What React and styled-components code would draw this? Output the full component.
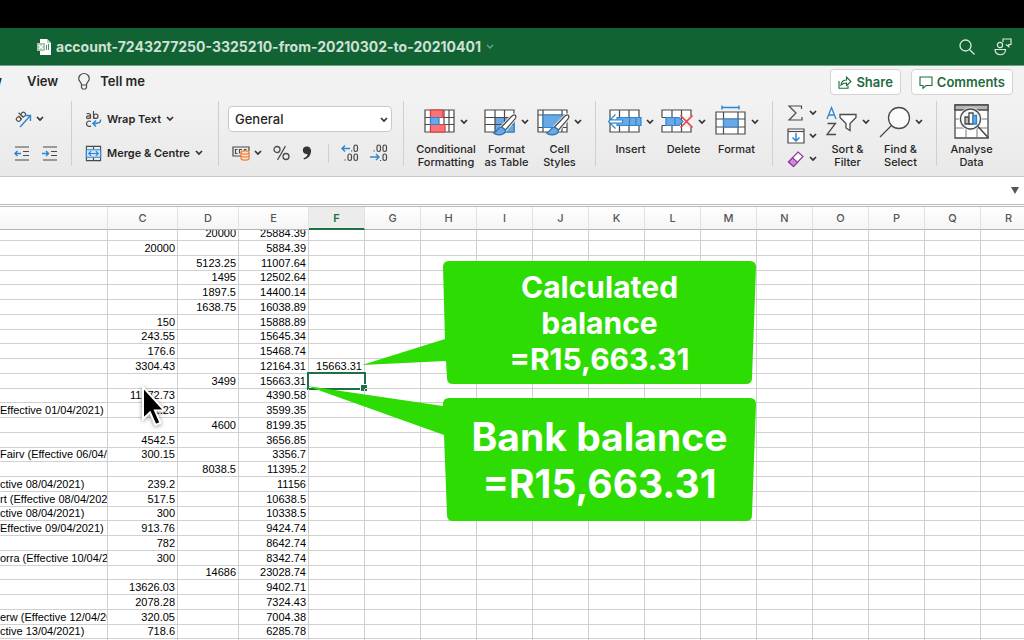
import React from 'react'
import styled, { createGlobalStyle } from 'styled-components'

const COLUMNS = ['C', 'D', 'E', 'F', 'G', 'H', 'I', 'J', 'K', 'L', 'M', 'N', 'O', 'P', 'Q', 'R']
const WIDTHS = { B: 108, C: 70, D: 61, E: 70 }

// [description, debit, credit, balance, check]
const ROWS = [
    ['', '', '20000', '25884.39'],
    ['', '20000', '', '5884.39'],
    ['', '', '5123.25', '11007.64'],
    ['', '', '1495', '12502.64'],
    ['', '', '1897.5', '14400.14'],
    ['', '', '1638.75', '16038.89'],
    ['', '150', '', '15888.89'],
    ['', '243.55', '', '15645.34'],
    ['', '176.6', '', '15468.74'],
    ['', '3304.43', '', '12164.31', '15663.31'],
    ['', '', '3499', '15663.31'],
    ['', '11272.73', '', '4390.58'],
    ['Effective 01/04/2021)', '791.23', '', '3599.35'],
    ['', '', '4600', '8199.35'],
    ['', '4542.5', '', '3656.85'],
    ['Fairv (Effective 06/04/2021)', '300.15', '', '3356.7'],
    ['', '', '8038.5', '11395.2'],
    ['ctive 08/04/2021)', '239.2', '', '11156'],
    ['rt (Effective 08/04/2021)', '517.5', '', '10638.5'],
    ['ctive 08/04/2021)', '300', '', '10338.5'],
    ['Effective 09/04/2021)', '913.76', '', '9424.74'],
    ['', '782', '', '8642.74'],
    ['orra (Effective 10/04/2021)', '300', '', '8342.74'],
    ['', '', '14686', '23028.74'],
    ['', '13626.03', '', '9402.71'],
    ['', '2078.28', '', '7324.43'],
    ['erw (Effective 12/04/2021)', '320.05', '', '7004.38'],
    ['ctive 13/04/2021)', '718.6', '', '6285.78'],
    ['', '', '', ''],
]

const SELECTED_ROW = 10

const ink = '#4a4a4a'
const blue = '#2f86d0'
const fill = '#6aa9e6'

function Chevron() {
    return (
        <svg width="8" height="6" viewBox="0 0 8 6" fill="none" stroke="#333" strokeWidth="1.7">
            <path d="M1 1l3 3 3-3" />
        </svg>
    )
}

function FileIcon() {
    return (
        <svg width="14" height="16" viewBox="0 0 14 16">
            <path d="M3 0h7l4 4v12H3z" fill="#fff" />
            <path d="M10 0v4h4z" fill="#b9d3c3" />
            <rect x="0" y="4" width="8" height="8" fill="#a5c7b2" />
            <path d="M2 6l4 4M6 6l-4 4" stroke="#fff" strokeWidth="1.2" />
            <path d="M9.5 6v5M11.5 5v6" stroke="#4f8d68" />
        </svg>
    )
}

function SearchIcon() {
    return (
        <svg width="16" height="16" viewBox="0 0 16 16" fill="none" stroke="#dbe9e0" strokeWidth="1.3">
            <circle cx="6.5" cy="6.5" r="5.5" />
            <path d="M10.5 10.5l5 5" />
        </svg>
    )
}

function PeopleIcon() {
    return (
        <svg width="18" height="18" viewBox="0 0 18 18" fill="none" stroke="#dbe9e0" strokeWidth="1.2">
            <circle cx="6" cy="7" r="2.6" />
            <path d="M1 11.5h10.5c0 7-10.5 7-10.5 0z" />
            <path d="M9 4V1h8v5.5h-2.2v2.2L12 6.5" />
        </svg>
    )
}

function BulbIcon() {
    return (
        <svg width="12" height="17" viewBox="0 0 12 17" fill="none" stroke={ink} strokeWidth="1.2">
            <path d="M3.5 11.5c0-2-2.8-3-2.8-6a5.3 5 0 0110.6 0c0 3-2.8 4-2.8 6v3l-1 1.5h-3l-1-1.5zM3.5 12h5" />
        </svg>
    )
}

function ShareIcon() {
    return (
        <svg width="14" height="13" viewBox="0 0 14 13" fill="none" stroke="#1f6b3d" strokeWidth="1.1">
            <path d="M1 5v7.3h9V9.5" />
            <path d="M3 9c.5-3.5 2.5-5 5.5-5V1l4.5 4.5-4.5 4V7C6 7 4.5 7.5 3 9z" />
        </svg>
    )
}

function CommentIcon() {
    return (
        <svg width="14" height="13" viewBox="0 0 14 13" fill="none" stroke="#1f6b3d" strokeWidth="1.1">
            <path d="M1 1h12v8.5H7L4 12.3V9.5H1z" />
        </svg>
    )
}

function OrientationIcon() {
    return (
        <svg width="18" height="17" viewBox="0 0 18 17" fill="none" stroke={ink} strokeWidth="1.1">
            <g transform="rotate(-45 6 6)">
                <circle cx="3.5" cy="6.5" r="2.2" />
                <path d="M5.7 4v5M8 2v7" />
                <circle cx="10.2" cy="6.5" r="2.2" />
            </g>
            <path d="M6 16L16 5M11 4.5h5.5V10" stroke={blue} strokeWidth="1.4" />
        </svg>
    )
}

function IndentIcon({ right }) {
    return (
        <svg width="16" height="15" viewBox="0 0 16 15" fill="none" stroke={ink} strokeWidth="1.2">
            <path d="M1 1h14M9 5.5h6M9 9.5h6M1 14h14" />
            <path
                d={right ? 'M0 7.5h6.5M4 5l2.5 2.5L4 10' : 'M7 7.5H.8M3.5 5L1 7.5 3.5 10'}
                stroke={blue}
                strokeWidth="1.5"
            />
        </svg>
    )
}

function WrapIcon() {
    return (
        <svg width="17" height="18" viewBox="0 0 17 18" fill="none" stroke={ink} strokeWidth="1.2">
            <path d="M1.5 4.2c1-1 4-1 4 .8v3.7M5.5 6c-2-.2-4 0-4 1.3 0 1.8 3 1.6 4-.3M8.5 1v7.7" />
            <circle cx="10.8" cy="6.2" r="2.2" />
            <path d="M6 11.5c-1.5-1-4.5-.5-4.5 2.2s3 3.3 4.5 2.2" />
            <path d="M15.5 9.5c.5 3-1.5 4-7 4M11 10.5l-3 3 3 3" stroke={blue} strokeWidth="1.6" />
        </svg>
    )
}

function MergeIcon() {
    return (
        <svg width="17" height="17" viewBox="0 0 18 17" fill="none" stroke={ink} strokeWidth="1.2">
            <path d="M1.5 1h15v15h-15zM9 1v3M9 13v3" />
            <path d="M1.5 4.5h15v8h-15z" fill="#cfe4f7" stroke={blue} />
            <path d="M4.5 8.5h9M6.5 6L4 8.5 6.5 11M11.5 6L14 8.5 11.5 11" stroke={blue} strokeWidth="1.3" />
        </svg>
    )
}

function CurrencyIcon() {
    return (
        <svg width="18" height="16" viewBox="0 0 18 16" fill="none" stroke={ink} strokeWidth="1.2">
            <path d="M9 11H1V2h16v4" />
            <path d="M5.5 4.5h-2v4h2M10 4.5H7.5v4M12.5 6V4.5h2" />
            <g fill="#fbe3d3" stroke="#ee7a2d">
                <path d="M9 7.5v6c0 2.2 8 2.2 8 0v-6" />
                <path d="M9 10.5c0 2 8 2 8 0" />
                <ellipse cx="13" cy="7.5" rx="4" ry="1.6" />
            </g>
        </svg>
    )
}

function PercentIcon() {
    return (
        <svg width="17" height="16" viewBox="0 0 17 16" fill="none" stroke={ink} strokeWidth="1.3">
            <circle cx="4" cy="4.5" r="3" />
            <circle cx="13" cy="11.5" r="3" />
            <path d="M12.5 1l-8 14" />
        </svg>
    )
}

function CommaIcon() {
    return (
        <svg width="10" height="14" viewBox="0 0 10 14" fill="#333">
            <path d="M4.5.5c3 0 5 2 4.5 5.5C8.500 10 6 12.500 2 13.500l-.5-1.200C4 11.500 5.500 10 5.500 8 3 8.500.8 7 .8 4.300.8 2 2.500.5 4.500.5z" />
        </svg>
    )
}

function DecimalIcon({ more }) {
    return (
        <svg width="18" height="18" viewBox="0 0 18 18" fill="none" stroke={ink} strokeWidth="1.2">
            {more ? (
                <>
                    <rect x="13" y="1" width="3.5" height="6.5" rx="1.7" />
                    <rect x="7" y="10" width="3.5" height="6.5" rx="1.7" />
                    <rect x="13" y="10" width="3.5" height="6.5" rx="1.7" />
                    <path d="M3.5 16h1.3M10 7h1.2" />
                    <path d="M9 4.5H1M4 1.5l-3 3 3 3" stroke={blue} strokeWidth="1.4" />
                </>
            ) : (
                <>
                    <rect x="7" y="1" width="3.5" height="6.5" rx="1.7" />
                    <rect x="13" y="1" width="3.5" height="6.5" rx="1.7" />
                    <rect x="13" y="10" width="3.5" height="6.5" rx="1.7" />
                    <path d="M3.5 7h1.3M10 16.5h1.2" />
                    <path d="M0 13h9M6 10l3 3-3 3" stroke={blue} strokeWidth="1.4" />
                </>
            )}
        </svg>
    )
}

function Brush() {
    return (
        <>
            <path d="M31 8c1.5 1 1 2.5 0 4l-9.500 11-4-3L27 10c1.500-1.500 3-2.500 4-2z" fill="#fff" stroke="#f0f0f0" strokeWidth="3" />
            <path d="M31 8c1.5 1 1 2.5 0 4l-9.500 11-4-3L27 10c1.500-1.500 3-2.500 4-2z" fill="#fff" />
            <path d="M17.5 20c-4 0-4 5-8 6 4 3.5 12 2 12-3z" fill={fill} stroke="#2b6fae" />
        </>
    )
}

function ConditionalIcon() {
    return (
        <svg width="32" height="30" viewBox="0 0 32 30" fill="none" stroke={ink} strokeWidth="1.2">
            <path d="M1 3h29v22H1z" fill="#fff" />
            <path d="M1 10.5h29M1 17.5h29M6.5 3v22M20 3v22M25 3v22" />
            <path d="M6.5 3H19v7.5H6.5zM6.5 17.5H21V25H6.5z" fill="#fb7379" stroke="#e0393f" />
            <path d="M6.5 10.5H15v7H6.5z" fill={fill} stroke={blue} />
        </svg>
    )
}

function TableIcon() {
    return (
        <svg width="33" height="30" viewBox="0 0 33 30" fill="none" stroke={ink} strokeWidth="1.2">
            <path d="M1 3h29v22H1z" fill="#fff" />
            <path d="M11 10.5h19V25H11z" fill={fill} stroke="none" />
            <path d="M1 10.5h29M1 17.5h29M11 3v22M20.5 3v22" />
            <path d="M11 25h19V10.5" stroke={blue} />
            <Brush />
        </svg>
    )
}

function StylesIcon() {
    return (
        <svg width="33" height="30" viewBox="0 0 33 30" fill="none" stroke={ink} strokeWidth="1.2">
            <path d="M1 3h29v22H1z" fill="#fff" />
            <path d="M1 8h29M1 20.5h29M6 3v22M25 3v22" />
            <path d="M6 8h19v12.5H6z" fill={fill} stroke={blue} />
            <Brush />
        </svg>
    )
}

function InsertIcon() {
    return (
        <svg width="34" height="30" viewBox="0 0 34 30" fill="none" stroke={ink} strokeWidth="1.2">
            <path d="M2 3h29v22H2zM11.5 3v22M21 3v22" fill="#fff" />
            <path d="M9 10.5h24v8H9z" fill={fill} stroke={blue} />
            <path d="M21.5 10.5v8M28 10.5v8" stroke={blue} />
            <path d="M7.5 7L0 14.5 7.5 22v-5.5H15v-4H7.5z" fill="#fff" stroke="none" />
            <path d="M7.5 7.5l-7 7 7 7M1 12.9h13.5v3.2H1" stroke={blue} />
        </svg>
    )
}

function DeleteIcon() {
    return (
        <svg width="33" height="30" viewBox="0 0 33 30" fill="none" stroke={ink} strokeWidth="1.2">
            <path d="M1 3h29v22H1zM11 3v22M20.5 3v22" fill="#fff" />
            <path d="M0 10.5h5v8H0zM24 9h9v11h-9z" fill="#f0f0f0" stroke="none" />
            <path d="M1 10.5h5M1 18.5h5" />
            <path d="M5 10.5h13l4 4-4 4H5zM14 10.5v8" fill={fill} stroke={blue} />
            <path d="M19.5 8.5l12 12M31.5 8.5l-12 12" stroke="#e8434a" strokeWidth="1.7" />
        </svg>
    )
}

function FormatIcon() {
    return (
        <svg width="32" height="34" viewBox="0 0 32 34" fill="none" stroke={ink} strokeWidth="1.2">
            <path d="M1 7h29v22H1z" fill="#fff" />
            <path d="M1 14h29M1 22h29M8.5 7v22M23 7v22" />
            <path d="M8.5 14H23v8H8.5z" fill={fill} stroke={blue} />
            <path d="M7 2.5h17M7 .5v4M24 .5v4" stroke={blue} strokeWidth="1.4" />
        </svg>
    )
}

function SumIcon() {
    return (
        <svg width="18" height="16" viewBox="0 0 18 16" fill="none" stroke={ink} strokeWidth="1.2">
            <path d="M14.5 4V1H2l7 7-7 7h13v-3" />
        </svg>
    )
}

function FillIcon() {
    return (
        <svg width="18" height="16" viewBox="0 0 18 16" fill="none" stroke={ink} strokeWidth="1.2">
            <path d="M1 1h16v14H1z" fill="#fff" />
            <path d="M1 3.5h16" />
            <path d="M9 5v7.5M5.5 9.5L9 13l3.5-3.5" stroke={blue} strokeWidth="1.5" />
        </svg>
    )
}

function EraserIcon() {
    return (
        <svg width="18" height="16" viewBox="0 0 18 16" stroke="#8e3a9b" strokeWidth="1.2">
            <path d="M11 1l5 4.5-9.5 10-5-4.500z" fill="#fff" />
            <path d="M5.5 6.8l5 4.5-4 4.2-5-4.500z" fill="#d08bdb" />
        </svg>
    )
}

function SortIcon() {
    return (
        <svg width="32" height="32" viewBox="0 0 32 32" fill="none" strokeWidth="1.3">
            <path d="M1 13L5.5 1.5 10 13M2.7 9h5.7" stroke={blue} />
            <path d="M1.5 17.5h8L1 28.5h9" stroke={ink} />
            <path d="M14 8.5h16v3l-6 6v7L20 22v-4.500l-6-6z" fill="#fff" stroke={ink} />
        </svg>
    )
}

function FindIcon() {
    return (
        <svg width="32" height="32" viewBox="0 0 32 32" fill="none" stroke={ink} strokeWidth="1.3">
            <circle cx="20" cy="12" r="10.5" fill="#fafafa" />
            <path d="M12.5 19.5L1 31" />
        </svg>
    )
}

function AnalyseIcon() {
    return (
        <svg width="36" height="36" viewBox="0 0 36 36" fill="none" stroke={ink} strokeWidth="1.3">
            <path d="M1 1h33v33H1z" fill="#fff" />
            <path d="M1 1h33v5H1z" fill="#b5b5b5" />
            <path d="M1 15h33M1 24h33M12 6v28M23 6v28" stroke="#777" strokeWidth="1" />
            <circle cx="16.5" cy="15" r="11.5" fill="#f0f0f0" stroke="none" />
            <circle cx="16.5" cy="15" r="10" fill="#fafafa" />
            <path d="M24 22.5L34.5 34" strokeWidth="1.6" />
            <path d="M11 13h4v7h-4z" fill="#bdbdbd" />
            <path d="M15 9h4v11h-4z" fill="#fff" />
            <path d="M19 11.5h3.5V20H19z" fill={fill} stroke={blue} />
        </svg>
    )
}

function PointerIcon() {
    return (
        <svg width="25" height="42" viewBox="0 0 25 42">
            <path d="M2 2v32l7-6.5L14.5 40l5-2.200L14 25.500h9.500z" fill="#000" stroke="#fff" strokeWidth="2" />
        </svg>
    )
}

function Tool({ icon, label, wide }) {
    return (
        <ToolButton type="button" $wide={wide}>
            <ToolArt>
                {icon}
                <Chevron />
            </ToolArt>
            <ToolLabel>{label}</ToolLabel>
        </ToolButton>
    )
}

function App() {
    return (
        <Page>
            <GlobalStyle />
            <TitleBar>
                <FileTitle>
                    <FileIcon />
                    <h1>account-7243277250-3325210-from-20210302-to-20210401</h1>
                    <svg width="8" height="6" viewBox="0 0 8 6" fill="none" stroke="#6fa083" strokeWidth="1.5">
                        <path d="M1 1l3 3 3-3" />
                    </svg>
                </FileTitle>
                <TitleActions>
                    <IconButton type="button" aria-label="Search"><SearchIcon /></IconButton>
                    <IconButton type="button" aria-label="People"><PeopleIcon /></IconButton>
                </TitleActions>
            </TitleBar>

            <TabBar>
                <CutTab><Tab type="button">Review</Tab></CutTab>
                <Tab type="button">View</Tab>
                <Tab type="button"><BulbIcon />Tell me</Tab>
                <TabActions>
                    <ActionButton type="button"><ShareIcon />Share</ActionButton>
                    <ActionButton type="button"><CommentIcon />Comments</ActionButton>
                </TabActions>
            </TabBar>

            <Ribbon>
                <SmallGroup $width={72} $pad={14}>
                    <ToolLine>
                        <IconButton type="button" aria-label="Orientation"><OrientationIcon /><Chevron /></IconButton>
                    </ToolLine>
                    <ToolLine>
                        <IconButton type="button" aria-label="Decrease indent"><IndentIcon /></IconButton>
                        <IconButton type="button" aria-label="Increase indent"><IndentIcon right /></IconButton>
                    </ToolLine>
                </SmallGroup>
                <SmallGroup $width={147} $pad={13}>
                    <TextTool type="button"><WrapIcon />Wrap Text<Chevron /></TextTool>
                    <TextTool type="button"><MergeIcon />Merge &amp; Centre<Chevron /></TextTool>
                </SmallGroup>
                <SmallGroup $width={185} $pad={9}>
                    <SelectBox>
                        <select aria-label="Number format" defaultValue="General">
                            <option>General</option>
                        </select>
                        <Chevron />
                    </SelectBox>
                    <NumberLine>
                        <IconButton type="button" aria-label="Currency"><CurrencyIcon /><Chevron /></IconButton>
                        <IconButton type="button" aria-label="Percent"><PercentIcon /></IconButton>
                        <IconButton type="button" aria-label="Comma"><CommaIcon /></IconButton>
                        <Rule />
                        <IconButton type="button" aria-label="Increase decimal"><DecimalIcon more /></IconButton>
                        <IconButton type="button" aria-label="Decrease decimal"><DecimalIcon /></IconButton>
                    </NumberLine>
                </SmallGroup>
                <Group>
                    <Tool wide icon={<ConditionalIcon />} label={<>Conditional<br />Formatting</>} />
                    <Tool icon={<TableIcon />} label={<>Format<br />as Table</>} />
                    <Tool icon={<StylesIcon />} label={<>Cell<br />Styles</>} />
                </Group>
                <Group>
                    <Tool icon={<InsertIcon />} label="Insert" />
                    <Tool icon={<DeleteIcon />} label="Delete" />
                    <Tool icon={<FormatIcon />} label="Format" />
                </Group>
                <Group>
                    <EditStack>
                        <IconButton type="button" aria-label="AutoSum"><SumIcon /><Chevron /></IconButton>
                        <IconButton type="button" aria-label="Fill"><FillIcon /><Chevron /></IconButton>
                        <IconButton type="button" aria-label="Clear"><EraserIcon /><Chevron /></IconButton>
                    </EditStack>
                    <Tool icon={<SortIcon />} label={<>Sort &amp;<br />Filter</>} />
                    <Tool icon={<FindIcon />} label={<>Find &amp;<br />Select</>} />
                </Group>
                <Group>
                    <ToolButton type="button">
                        <ToolArt><AnalyseIcon /></ToolArt>
                        <ToolLabel>Analyse<br />Data</ToolLabel>
                    </ToolButton>
                </Group>
            </Ribbon>

            <FormulaBar>
                <input type="text" aria-label="Formula" />
                <IconButton type="button" aria-label="Expand formula bar">
                    <svg width="8" height="7" viewBox="0 0 8 7"><path d="M0 0h8L4 7z" fill="#555" /></svg>
                </IconButton>
            </FormulaBar>

            <SheetArea>
                <Sheet>
                    <colgroup>
                        <Col $width={WIDTHS.B} />
                        {COLUMNS.map((name) => (
                            <Col key={name} $width={WIDTHS[name] || 56} />
                        ))}
                    </colgroup>
                    <thead>
                        <tr>
                            <HeadCell />
                            {COLUMNS.map((name) => (
                                <HeadCell key={name} scope="col" $active={name === 'F'}>{name}</HeadCell>
                            ))}
                        </tr>
                    </thead>
                    <tbody>
                        {ROWS.map(([text, ...values], index) => (
                            <Row key={index}>
                                <Cell $text><span>{text}</span></Cell>
                                {COLUMNS.map((name, col) => (
                                    <Cell key={name}>
                                        <span>{values[col]}</span>
                                        {index === SELECTED_ROW && name === 'F' && <Selection />}
                                    </Cell>
                                ))}
                            </Row>
                        ))}
                    </tbody>
                </Sheet>
                <Pointer><PointerIcon /></Pointer>
                <Callout $top={54}>
                    <svg width="313" height="123" viewBox="0 0 313 123">
                        <path d="M6 0H307Q313 0 313 6L309 117Q309 123 303 123H10Q4 123 4 117L3 100-81 104 2 78 0 6Q0 0 6 0z" />
                    </svg>
                    <p>Calculated<br />balance<br />=R15,663.31</p>
                </Callout>
                <Callout $top={191} $large>
                    <svg width="313" height="123" viewBox="0 0 313 123">
                        <path d="M6 0H307Q313 0 313 6L309 117Q309 123 303 123H10Q4 123 4 117L1 37-136-12 0 8V6Q0 0 6 0z" />
                    </svg>
                    <p>Bank balance<br />=R15,663.31</p>
                </Callout>
            </SheetArea>
        </Page>
    )
}

export default App

const GlobalStyle = createGlobalStyle`
    * {
        box-sizing: border-box;
    }
    body {
        margin: 0;
        font-family: Inter, "Liberation Sans", sans-serif;
        color: #262626;
    }
    button, input, select {
        font: inherit;
        color: inherit;
    }
    button {
        padding: 0;
        border: none;
        background: none;
        white-space: nowrap;
    }
    svg {
        display: block;
        flex-shrink: 0;
        overflow: visible;
    }
`

const Page = styled.div`
    height: 100vh;
    display: flex;
    flex-direction: column;
    overflow: hidden;
    border-top: 28px solid #000;
    background: #fff;
`

const TitleBar = styled.header`
    flex: none;
    height: 38px;
    padding: 0 12px 0 37px;
    display: flex;
    align-items: center;
    justify-content: space-between;
    background: #126334;
    border-bottom: 1px solid #6f9f82;
`

const FileTitle = styled.div`
    display: flex;
    align-items: center;
    gap: 5px;
    h1 {
        margin: 0;
        font-size: 14px;
        font-weight: 700;
        color: #cfe0d6;
    }
`

const TitleActions = styled.div`
    display: flex;
    align-items: center;
    gap: 19px;
`

const IconButton = styled.button`
    display: flex;
    align-items: center;
    gap: 4px;
`

const TabBar = styled.nav`
    flex: none;
    height: 32px;
    display: flex;
    align-items: center;
    background: #f2f2f2;
`

const Tab = styled.button`
    display: flex;
    align-items: center;
    gap: 10px;
    height: 32px;
    padding-bottom: 2px;
    margin-right: 20px;
    font-size: 13px;
    font-weight: 600;
`

const CutTab = styled.div`
    width: 2px;
    margin-right: 25px;
    display: flex;
    justify-content: flex-end;
    overflow: hidden;
    ${Tab} {
        margin: 0;
    }
`

const TabActions = styled.div`
    display: flex;
    gap: 10px;
    margin-left: auto;
    padding-right: 11px;
`

const ActionButton = styled.button`
    display: flex;
    align-items: center;
    gap: 4px;
    height: 26px;
    padding: 0 7px;
    border: 1px solid #d4d4d0;
    border-radius: 4px;
    background: #fff;
    color: #1f6b3d;
    font-size: 13px;
    font-weight: 600;
`

const Ribbon = styled.div`
    flex: none;
    display: flex;
    padding: 3px 0 10px;
    background: linear-gradient(#f2f2f2, #e9e9e9);
    border-bottom: 1px solid #c9c9c9;
`

const Group = styled.div`
    display: flex;
    flex: none;
    gap: 8px;
    height: 65px;
    padding: 0 13px 0 12px;
    border-right: 1px solid #cfcfcf;
    &:last-child {
        border-right: none;
    }
`

const SmallGroup = styled(Group)`
    flex-direction: column;
    width: ${(props) => props.$width}px;
    padding: 5px 0 0 ${(props) => props.$pad}px;
`

const ToolLine = styled.div`
    display: flex;
    align-items: center;
    height: 26px;
    gap: 12px;
`

const TextTool = styled.button`
    display: flex;
    align-items: center;
    gap: 5px;
    height: 26px;
    font-size: 11px;
    font-weight: 600;
`

const SelectBox = styled.div`
    position: relative;
    width: 164px;
    height: 26px;
    select {
        width: 100%;
        height: 100%;
        padding: 0 6px;
        appearance: none;
        border: 1px solid #c9c9c9;
        border-radius: 4px;
        background: #fff;
        font-size: 13px;
        font-weight: 500;
    }
    svg {
        position: absolute;
        right: 4px;
        top: 11px;
    }
`

const NumberLine = styled.div`
    display: flex;
    align-items: center;
    justify-content: space-between;
    width: 164px;
    height: 26px;
    padding: 0 4px;
`

const Rule = styled.span`
    width: 1px;
    height: 19px;
    margin-left: 5px;
    background: #cfcfcf;
`

const ToolButton = styled.button`
    display: flex;
    flex-direction: column;
    align-items: center;
    justify-content: flex-start;
    width: ${(props) => (props.$wide ? 60 : 45)}px;
`

const ToolArt = styled.span`
    flex: none;
    display: flex;
    align-items: center;
    justify-content: center;
    gap: 4px;
    height: 42px;
`

const ToolLabel = styled.span`
    font-size: 11px;
    font-weight: 500;
    line-height: 13px;
    text-align: center;
`

const EditStack = styled.div`
    display: flex;
    flex-direction: column;
    gap: 7px;
    padding: 4px 0 0 2px;
`

const FormulaBar = styled.div`
    flex: none;
    display: flex;
    align-items: center;
    height: 30px;
    padding-right: 5px;
    background: #fff;
    border-bottom: 3px double #b9b9b9;
    input {
        flex: 1;
        border: none;
        outline: none;
        background: none;
    }
`

const SheetArea = styled.main`
    position: relative;
    flex: 1;
    min-height: 0;
    overflow: hidden;
    font-family: "Liberation Sans", Arial, sans-serif;
    font-size: 11px;
`

const Sheet = styled.table`
    table-layout: fixed;
    width: 0;
    border-collapse: separate;
    border-spacing: 0;
    color: #000;
`

const Col = styled.col`
    width: ${(props) => props.$width}px;
`

const HeadCell = styled.th`
    height: 23px;
    padding: 0;
    border-right: 1px solid #e2e2e2;
    border-bottom: ${(props) => (props.$active ? '2px solid #1e7145' : '1px solid #b5b5b5')};
    background: ${(props) => (props.$active ? '#ececec' : 'linear-gradient(#fff, #f4f4f4)')};
    color: ${(props) => (props.$active ? '#1e7145' : '#555')};
    font-family: Inter, sans-serif;
    font-size: 11px;
    font-weight: ${(props) => (props.$active ? 600 : 500)};
`

const Cell = styled.td`
    position: relative;
    padding: 0 ${(props) => (props.$text ? 0 : 2)}px 0 0;
    border-right: 1px solid #d0d0d0;
    border-bottom: 1px solid #d0d0d0;
    span {
        display: flex;
        align-items: flex-end;
        justify-content: ${(props) => (props.$text ? 'flex-start' : 'flex-end')};
        height: 14px;
        line-height: 13px;
        white-space: nowrap;
        overflow: hidden;
    }
`

const Row = styled.tr`
    &:nth-child(4n) ${Cell} span {
        height: 13px;
    }
    /* scrolled partly under the header */
    &:first-child ${Cell} span {
        height: 10px;
    }
`

const Selection = styled.i`
    position: absolute;
    inset: -2px;
    border: 2px solid #1e7145;
    &::after {
        content: '';
        position: absolute;
        right: -3px;
        bottom: -3px;
        width: 6px;
        height: 6px;
        background: #1e7145;
        border: 1px solid #fff;
        border-width: 1px 0 0 1px;
    }
`

const Pointer = styled.div`
    position: absolute;
    left: 141px;
    top: 178px;
    filter: drop-shadow(0 1px 2px rgba(0, 0, 0, 0.4));
`

const Callout = styled.div`
    position: absolute;
    left: 443px;
    top: ${(props) => props.$top}px;
    width: 313px;
    height: 123px;
    display: flex;
    align-items: center;
    justify-content: center;
    svg {
        position: absolute;
        inset: 0;
        fill: #2ddc02;
    }
    p {
        position: relative;
        margin: 0;
        color: #fff;
        font-family: Inter, sans-serif;
        font-size: ${(props) => (props.$large ? 39 : 30)}px;
        line-height: ${(props) => (props.$large ? 47 : 36)}px;
        font-weight: 700;
        text-align: center;
        white-space: nowrap;
    }
`
